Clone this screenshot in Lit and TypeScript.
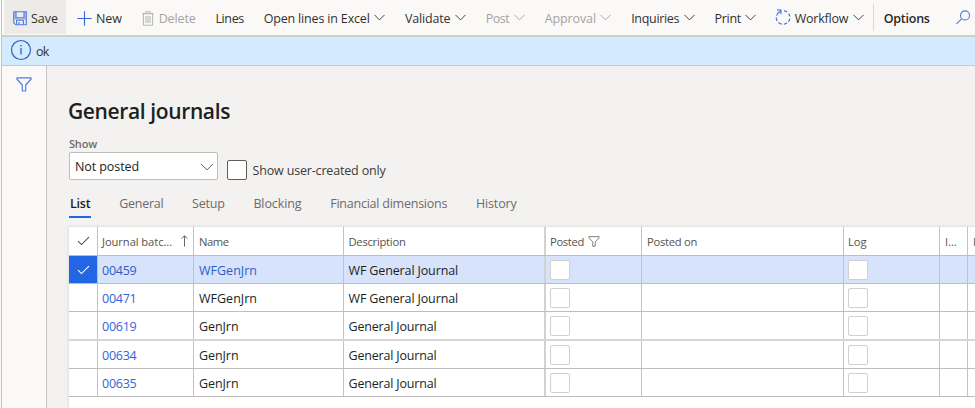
import { LitElement, html, css, nothing } from "lit";
import { customElement } from "lit/decorators.js";
import { styleMap } from "lit/directives/style-map.js";

const ctx = document.createElement("canvas").getContext("2d")!;

/** Text set to a given advance width by adjusting its tracking. */
function fit(text: string, width: number, size = 12.5, weight = 400) {
  ctx.font = `${weight} ${size}px "Open Sans"`;
  const spacing = (width - ctx.measureText(text).width) / text.length;
  return html`<span style=${styleMap({ letterSpacing: spacing.toFixed(3) + "px" })}>${text}</span>`;
}

const chevron = html`<svg class="chev" width="11" height="7" viewBox="0 0 11 7">
  <path d="M.5 .9L5.5 5.9L10.5 .9" fill="none" stroke="currentColor" stroke-width=".9" /></svg>`;

const funnel = (w: number, h: number, cls: string) => html`<svg class=${cls} width=${w} height=${h} viewBox="0 0 16 15">
  <path d="M.9 .9H15.1V2L9.7 8V14H6.3V8L.9 2Z" fill="none" stroke="currentColor" stroke-width="1.15" stroke-linejoin="round" /></svg>`;

const check = html`<svg width="13" height="10" viewBox="0 0 13 10">
  <path d="M1 5.2L4.5 8.6L12 1.1" fill="none" stroke="currentColor" stroke-width="1.1" /></svg>`;

const icons: Record<string, unknown> = {
  save: html`<svg width="14" height="15" viewBox="0 0 14 15"><g fill="none" stroke="#4f7be2" stroke-width="1.1">
    <path d="M.7 .8H13.3V13.8H2.8L.7 11.7Z" /><path d="M3 .8V6.8H11V.8" /><path d="M3.6 13.8V9.3H10.4V13.8M6 11V13.8" /></g>
    <path d="M1 .8H3V7H1ZM11 .8H13V7H11ZM1 7H13V9H1Z" fill="#3f6fe0" opacity=".3" /></svg>`,
  plus: html`<svg width="15" height="15" viewBox="0 0 15 15"><path d="M7.5 .3V14.7M.3 7.5H14.7" stroke="#3566dd" stroke-width="1.1" /></svg>`,
  trash: html`<svg width="12" height="15" viewBox="0 0 12 15"><g fill="none" stroke="#b9bab5" stroke-width="1.1">
    <path d="M.2 2.6H11.8M3.8 2.4V.7H8.2V2.4M1.4 2.8V14.3H10.6V2.8" /><path d="M4 5V12M6 5V12M8 5V12" /></g></svg>`,
  flow: html`<svg width="16" height="16" viewBox="0 0 16 16"><g fill="none" stroke="#3566dd" stroke-width="1.1">
    <path d="M5.6 2.2A6.8 6.8 0 0 0 1.6 6.6M1.2 8.6A6.8 6.8 0 0 0 2.2 12M3.5 13.5A6.8 6.8 0 0 0 6.6 15.1M8.8 15.2A6.8 6.8 0 0 0 12 14M13.4 12.6A6.8 6.8 0 0 0 14.8 9.6M14.8 7.4A6.8 6.8 0 0 0 13.7 4.6M12.2 3A6.8 6.8 0 0 0 9 1.7" />
    <path d="M2 1H5.9V4.9" /></g></svg>`,
};

interface Action { label: string; w: number; icon?: string; menu?: boolean; off?: boolean; }
const actions: Action[] = [
  { label: "New", w: 26, icon: "plus" },
  { label: "Delete", w: 37, icon: "trash", off: true },
  { label: "Lines", w: 28.5 },
  { label: "Open lines in Excel", w: 106, menu: true },
  { label: "Validate", w: 45.5, menu: true },
  { label: "Post", w: 23.7, menu: true, off: true },
  { label: "Approval", w: 51.3, menu: true, off: true },
  { label: "Inquiries", w: 48, menu: true },
  { label: "Print", w: 26.5, menu: true },
  { label: "Workflow", w: 53.5, icon: "flow", menu: true },
];

const tabs: [string, number][] = [
  ["List", 20.5], ["General", 44], ["Setup", 32.5], ["Blocking", 48], ["Financial dimensions", 117], ["History", 40.5],
];

const rows = [
  { id: "00459", name: "WFGenJrn", nw: 58, desc: "WF General Journal", dw: 109.5 },
  { id: "00471", name: "WFGenJrn", nw: 58, desc: "WF General Journal", dw: 109.5 },
  { id: "00619", name: "GenJrn", nw: 39.5, desc: "General Journal", dw: 88 },
  { id: "00634", name: "GenJrn", nw: 39.5, desc: "General Journal", dw: 88 },
  { id: "00635", name: "GenJrn", nw: 39.5, desc: "General Journal", dw: 88 },
];

@customElement("app-root")
export class AppRoot extends LitElement {
  static styles = css`
    :host { display: block; width: 975px; height: 408px; overflow: hidden; background: #f3f2f1;
      font: 12.5px/18px "Open Sans", sans-serif; color: #323130; white-space: nowrap; }
    * { box-sizing: border-box; }
    svg { display: block; flex: none; }
    .page { height: 408px; margin-left: 1px; border-left: 1px solid #c6c5c4; display: flex; flex-direction: column; }
    .edge { background: #faf9f8; height: 408px; display: flow-root; }
    .bar { height: 37px; flex: none; display: flex; background: #faf9f8; border-bottom: 2px solid #d0cfce; padding-left: 2px; }
    .save { width: 62px; height: 34px; background: #edebe9; display: flex; align-items: center; padding: 2px 0 0 9px; gap: 4px; }
    .actions { display: flex; gap: 19.75px; padding: 2px 0 0 10.6px; height: 34px; }
    .action { display: flex; align-items: center; }
    .action > span, .save > span, .opt > span { display: block; padding-top: 2px; }
    .action.off { color: #a5a3a1; }
    .ico { width: 19.3px; }
    .ico.trash { width: 17px; }
    .ico.flow { margin-left: -.8px; margin-top: -2px; }
    .chev { margin: 0 0 1px 4.5px; }
    .sep { width: 1px; height: 27px; margin: 4px 10px 0 9px; background: #dcdad8; }
    .opt { font-weight: 600; display: flex; align-items: center; height: 34px; padding-top: 2px; width: 72px; color: #292827; }
    .find { margin-top: 10px; }
    .msg { height: 29px; flex: none; background: #d3eaff; border-bottom: 1px solid #c6c8c9; display: flex; align-items: center; padding-left: 8px; gap: 4px; }
    .msg svg { margin-top: -2px; }
    .msg span { margin-top: 1px; }
    .body { flex: 1; display: flex; min-height: 0; background: #f3f2f1; }
    .rail { width: 45px; flex: none; background: #faf9f8; border-right: 1px solid #c8c6c4; padding: 11px 0 0 14px; color: #4f7be2; }
    .main { flex: 1; min-width: 0; padding-left: 22px; display: flex; flex-direction: column; }
    h1 { margin: 30px 0 0 -1px; font-size: 21px; line-height: 30px; font-weight: 600; color: #201f1e; }
    .show { margin-top: 10px; height: 16px; line-height: 16px; font-size: 11px; font-weight: 600; color: #6d6b69; }
    .filters { display: flex; margin-top: 0; height: 29px; }
    .select { width: 149px; height: 28px; background: #fff; border: 1px solid #c0beb9; border-radius: 2px; display: flex;
      align-items: center; justify-content: space-between; padding: 1px 3px 0 5px; color: #201f1e; }
    .select span { padding-top: 1px; }
    .box { width: 20px; height: 20px; border: 1px solid #605e5c; border-radius: 2px; background: #fff; margin: 8px 5.6px 0 9px; flex: none; }
    .uc { margin-top: 10px; color: #3b3a39; }
    .tabs { display: flex; gap: 28.8px; margin-top: 9px; height: 37px; padding-left: 1px; color: #6d6b69; }
    .tab { height: 28px; padding-top: 5px; line-height: 18px; }
    .tab.on { color: #201f1e; font-weight: 600; border-bottom: 2px solid #2266e3; margin-left: -1px; padding-left: 1px; }
    .grid { flex: 1; background: #fff; box-shadow: 0 0 3px #d0cfce; }
    .row { display: grid; grid-template-columns: 29px 96px 150px 202px 96px 202px 96px 28px 1fr; height: 28px; border-bottom: 1px solid #bfbdbb; color: #201f1e; }
    .row.soft { height: 29px; border-bottom: 2px solid #d8d7d6; }
    .row > div { border-right: 1px solid #c4c2c0; padding: 1px 0 0 5px; display: flex; align-items: center; overflow: hidden; }
    .row > div:nth-child(4) { border-right: 2px solid #d3d2d1; padding-left: 4.5px; }
    .row > div:nth-child(5), .row > div:nth-child(7), .row > div:nth-child(2) { padding-left: 4px; }
    .row > div:nth-child(9) { border-right: 0; }
    .row > div:nth-child(1) { justify-content: center; padding: 0; }
    .row:not(.head) > div > span { margin-top: 1px; }
    .row.head { height: 29px; font-size: 11.2px; color: #55534f; }
    .row.head > div { padding-top: 0; }
    .row.head > div > span { margin-top: 1px; }
    .row.sel { background: #d7e2fb; }
    .row.sel > div:nth-child(1) { background: #2266e3; color: #fff; }
    .row.sel > div:nth-child(2), .row.sel > div:nth-child(3) { color: #2c5fc4; }
    .row .link { color: #2f66dc; }
    .cb { width: 20px; height: 20px; border: 1px solid #d2d0ce; border-radius: 2px; background: #fff; }
    .up { margin-left: auto; margin-right: 5px; color: #6a6866; }
    .fil { margin-left: 4px; color: #6d6b5f; }
  `;

  private columns() {
    return html`<div class="row head">
      <div>${check}</div>
      <div>${fit("Journal batc...", 70, 11.2)}<svg class="up" width="7" height="12" viewBox="0 0 7 12">
        <path d="M3.5 11.6V1M.6 3.6L3.5 .8L6.4 3.6" fill="none" stroke="currentColor" /></svg></div>
      <div>${fit("Name", 29.5, 11.2)}</div>
      <div>${fit("Description", 57, 11.2)}</div>
      <div>${fit("Posted", 34, 11.2)}${funnel(12, 11, "fil")}</div>
      <div>${fit("Posted on", 50, 11.2)}</div>
      <div>${fit("Log", 18.5, 11.2)}</div>
      <div>${fit("I...", 12, 11.2)}</div>
      <div>${fit("I", 3, 11.2)}</div>
    </div>`;
  }

  render() {
    return html`<div class="edge"><div class="page">
      <div class="bar">
        <div class="save">${icons.save}${fit("Save", 27)}</div>
        <div class="actions">${actions.map((a) => html`<div class="action ${a.off ? "off" : ""}">
          ${a.icon ? html`<div class="ico ${a.icon}">${icons[a.icon]}</div>` : nothing}${fit(a.label, a.w)}${a.menu ? chevron : nothing}</div>`)}
        </div>
        <div class="sep"></div>
        <div class="opt">${fit("Options", 46, 12.5, 600)}</div>
        <svg class="find" width="15" height="15" viewBox="0 0 15 15"><g fill="none" stroke="#4f7be2" stroke-width="1.1">
          <circle cx="9" cy="5.4" r="4.5" /><path d="M5.8 8.6L.5 13.9" /></g></svg>
      </div>
      <div class="msg">
        <svg width="22" height="22" viewBox="0 0 22 22"><circle cx="11" cy="11" r="9.5" fill="none" stroke="#2a66b0" stroke-width="1.2" />
          <path d="M11 9V15.5M11 6V7.4" stroke="#2a66b0" stroke-width="1.3" /></svg>
        ${fit("ok", 12.5, 12.5)}
      </div>
      <div class="body">
        <div class="rail">${funnel(16, 15, "f")}</div>
        <div class="main">
          <h1>${fit("General journals", 162, 21, 600)}</h1>
          <div class="show">${fit("Show", 28, 11, 600)}</div>
          <div class="filters">
            <div class="select">${fit("Not posted", 64)}<svg width="14" height="8" viewBox="0 0 14 8">
              <path d="M1 .9L7 6.9L13 .9" fill="none" stroke="#605e5c" stroke-width="1" /></svg></div>
            <div class="box"></div>
            <div class="uc">${fit("Show user-created only", 133)}</div>
          </div>
          <div class="tabs">${tabs.map(([t, w], i) => html`<div class="tab ${i ? "" : "on"}">${fit(t, w, 12.5, i ? 400 : 600)}</div>`)}</div>
          <div class="grid">
            ${this.columns()}
            ${rows.map((r, i) => html`<div class="row ${i === 0 ? "sel" : i === 2 ? "soft" : ""}">
              <div>${i === 0 ? check : nothing}</div>
              <div class="link">${fit(r.id, 34.5)}</div>
              <div>${fit(r.name, r.nw)}</div>
              <div>${fit(r.desc, r.dw)}</div>
              <div><div class="cb"></div></div>
              <div></div>
              <div><div class="cb"></div></div>
              <div></div><div></div>
            </div>`)}
          </div>
        </div>
      </div>
    </div></div>`;
  }
}
